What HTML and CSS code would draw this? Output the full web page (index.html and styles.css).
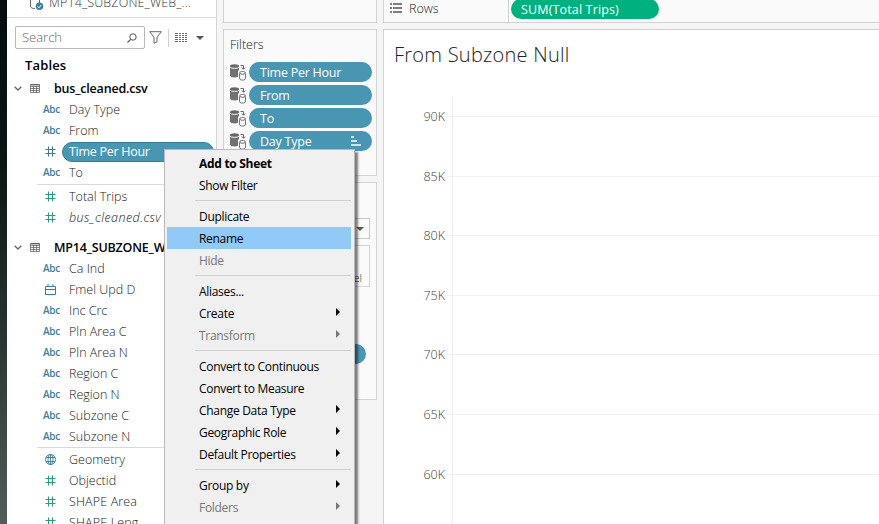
FILE: index.html
```
<!DOCTYPE html>
<html lang="en">
<head>
<meta charset="utf-8">
<title>Worksheet</title>
<link rel="stylesheet" href="styles.css">
</head>
<body>
<svg class="defs" aria-hidden="true">
  <symbol id="hash" viewBox="0 0 11 11"><path d="M3.5 .5v10M7.5 .5v10M.5 3.5h10M.5 7.5h10" fill="none" stroke="currentColor"/></symbol>
  <symbol id="table" viewBox="0 0 10 9"><path d="M.5 .5h9v8h-9zM.5 2.5h9M.5 4.5h9M.5 6.5h9M3.5 2v6M6.5 2v6" fill="none" stroke="#666" stroke-width=".8"/><path d="M.5 .7h9" stroke="#666" stroke-width="1.4"/></symbol>
  <symbol id="chev" viewBox="0 0 8 5"><path d="M.7 .7 4 4 7.3 .7" fill="none" stroke="#666" stroke-width="1.3"/></symbol>
  <symbol id="filterdb" viewBox="0 0 17 17"><path d="M0 2.500v9c0 2.600 9 2.600 9 0v-9z" fill="#717171"/><ellipse cx="4.500" cy="2" rx="4.500" ry="1.700" fill="#666"/><path d="M0 3.200c1 1.500 8 1.500 9 0" stroke="#fafafa" fill="none"/><path d="M8 6.500h3v8H8z" fill="#fafafa"/><rect x="9.500" y="7.500" width="6" height="8.500" rx="2" fill="#fafafa" stroke="#777"/><path d="M10 9.500c1 1 4 1 5 0M10.500 1.500h3V5M11.800 3.600l1.700 1.700 1.700-1.700" fill="none" stroke="#666"/></symbol>
</svg>
<div class="app">
  <div class="desktop"></div>
  <aside class="data">
    <div class="source">
      <svg width="16" height="14" viewBox="0 0 16 14"><path d="M1.500 0v6c0 2 2 2.500 4.500 2.500M10.500 0v3" fill="none" stroke="#666"/><circle cx="10.500" cy="6.300" r="3.800" fill="#3c82a0"/><path d="m8.700 6.300 1.300 1.500 2.300-2.800" fill="none" stroke="#fff"/></svg>
      <span>MP14_SUBZONE_WEB_...</span>
    </div>
    <div class="tools">
      <div class="search"><span>Search</span>
        <svg width="10" height="10" viewBox="0 0 10 10"><circle cx="6" cy="4" r="3.200" fill="none" stroke="#555"/><path d="M3.700 6.300.5 9.500" stroke="#555" stroke-width="1.200"/></svg>
      </div>
      <svg class="funnel" width="13" height="13" viewBox="0 0 13 13"><path d="M.7.700h11.600L8 6.300v4.500L5 12.300v-6z" fill="none" stroke="#666"/></svg>
      <i class="divider"></i>
      <svg class="list" width="12" height="9" viewBox="0 0 12 9"><path d="M0 .5h12M0 2.500h12M0 4.500h12M0 6.500h12M0 8.500h12" stroke="#666" stroke-dasharray="3 1 2 1 2 1 2 0"/></svg>
      <i class="caret"></i>
    </div>
    <h2>Tables</h2>
    <div class="table"><svg class="chev"><use href="#chev"/></svg><svg class="ticon"><use href="#table"/></svg><b>bus_cleaned.csv</b></div>
    <ul>
      <li><i class="abc">Abc</i><span>Day Type</span></li>
      <li><i class="abc">Abc</i><span>From</span></li>
      <li><svg class="hash dim"><use href="#hash"/></svg><span class="selected">Time Per Hour</span></li>
      <li><i class="abc">Abc</i><span>To</span></li>
    </ul>
    <ul class="measures first">
      <li><svg class="hash"><use href="#hash"/></svg><span>Total Trips</span></li>
      <li><svg class="hash"><use href="#hash"/></svg><em>bus_cleaned.csv</em></li>
    </ul>
    <div class="table second"><svg class="chev"><use href="#chev"/></svg><svg class="ticon"><use href="#table"/></svg><b>MP14_SUBZONE_WEB</b></div>
    <ul>
      <li><i class="abc">Abc</i><span>Ca Ind</span></li>
      <li><svg class="hash dim" viewBox="0 0 11 11"><path d="M.5 2.500h10v8H.5zM.5 5.500h10M3 0v3M8 0v3" fill="none" stroke="currentColor"/></svg><span>Fmel Upd D</span></li>
      <li><i class="abc">Abc</i><span>Inc Crc</span></li>
      <li><i class="abc">Abc</i><span>Pln Area C</span></li>
      <li><i class="abc">Abc</i><span>Pln Area N</span></li>
      <li><i class="abc">Abc</i><span>Region C</span></li>
      <li><i class="abc">Abc</i><span>Region N</span></li>
      <li><i class="abc">Abc</i><span>Subzone C</span></li>
      <li><i class="abc">Abc</i><span>Subzone N</span></li>
    </ul>
    <ul class="measures">
      <li><svg class="hash dim" viewBox="0 0 11 11"><g fill="none" stroke="currentColor" stroke-width=".9"><circle cx="5.500" cy="5.500" r="5"/><ellipse cx="5.500" cy="5.500" rx="2.500" ry="5"/><path d="M5.500.5v10M1 3.500h9M1 7.500h9"/></g></svg><span>Geometry</span></li>
      <li><svg class="hash"><use href="#hash"/></svg><span>Objectid</span></li>
      <li><svg class="hash"><use href="#hash"/></svg><span class="caps">SHAPE Area</span></li>
      <li><svg class="hash"><use href="#hash"/></svg><span class="caps">SHAPE Leng</span></li>
    </ul>
  </aside>
  <section class="shelves">
    <div class="card pages"></div>
    <div class="card filters">
      <h3>Filters</h3>
      <div class="filter"><svg><use href="#filterdb"/></svg><span class="pill">Time Per Hour</span></div>
      <div class="filter"><svg><use href="#filterdb"/></svg><span class="pill">From</span></div>
      <div class="filter"><svg><use href="#filterdb"/></svg><span class="pill">To</span></div>
      <div class="filter"><svg><use href="#filterdb"/></svg><span class="pill">Day Type<svg class="sort" viewBox="0 0 10 10"><path d="M0 1h3M0 5h6M0 9h10" stroke="#fff" stroke-width="1.500"/></svg></span></div>
    </div>
    <div class="card marks">
      <div class="select"><i class="caret"></i></div>
      <div class="mark">Label</div>
      <div class="pill"></div>
    </div>
  </section>
  <main>
    <div class="card rows">
      <div class="rowlabel"><svg width="12" height="10" viewBox="0 0 12 10"><path d="M0 1h2M3 1h9M0 5h2M3 5h9M0 9h2M3 9h9" stroke="#555" stroke-width="1.700"/></svg><span>Rows</span></div>
      <span class="pill green">SUM(Total Trips)</span>
    </div>
    <div class="card viz">
      <h1>From Subzone Null</h1>
      <div class="chart">
        <div class="tick"><span>90K</span><i></i></div>
        <div class="tick"><span>85K</span><i></i></div>
        <div class="tick"><span>80K</span><i></i></div>
        <div class="tick"><span>75K</span><i></i></div>
        <div class="tick"><span>70K</span><i></i></div>
        <div class="tick"><span>65K</span><i></i></div>
        <div class="tick"><span>60K</span><i></i></div>
      </div>
    </div>
  </main>
</div>
<nav class="menu">
  <div class="item bold">Add to Sheet</div>
  <div class="item">Show Filter</div>
  <hr>
  <div class="item">Duplicate</div>
  <div class="item hover">Rename</div>
  <div class="item off">Hide</div>
  <hr>
  <div class="item">Aliases...</div>
  <div class="item sub">Create</div>
  <div class="item sub off">Transform</div>
  <hr>
  <div class="item">Convert to Continuous</div>
  <div class="item">Convert to Measure</div>
  <div class="item sub">Change Data Type</div>
  <div class="item sub">Geographic Role</div>
  <div class="item sub">Default Properties</div>
  <hr>
  <div class="item sub">Group by</div>
  <div class="item sub off">Folders</div>
</nav>
</body>
</html>
```
FILE: styles.css
```
* { box-sizing: border-box; }
body { position: relative; margin: 0; width: 879px; height: 524px; overflow: hidden; font: 300 12.5px/21px "Open Sans", sans-serif; color: #222; }
h1, h2, h3, ul { margin: 0; padding: 0; list-style: none; }
svg { flex: none; display: block; }
.defs { position: absolute; width: 0; height: 0; }
.app { display: flex; height: 524px; background: #f5f5f5; overflow: hidden; white-space: nowrap; }
.desktop { flex: none; width: 7px; background: linear-gradient(#040c0f, #0a1516 30%, #25302f 60%, #3a4746 80%, #525c5b); }
.data { flex: none; width: 210px; background: #fff; border-right: 1px solid #d4d4d4; overflow: hidden; }
.source { height: 18px; border-bottom: 1px solid #ddd; display: flex; padding-left: 22px; overflow: hidden; }
.source span { margin: -8px 0 0 4px; color: #333; letter-spacing: .15px; }
.tools { display: flex; align-items: center; margin-top: 8px; padding-left: 8px; height: 23px; }
.search { width: 130px; height: 23px; border: 1px solid #b8b8b8; border-radius: 2px; display: flex; align-items: center; justify-content: space-between; padding: 0 7px 0 6px; color: #666; font-size: 13px; }
.funnel { margin-left: 4px; }
.divider { width: 1px; height: 18px; background: #d0d0d0; margin: 0 6px; }
.caret { border: 4px solid transparent; border-top: 4px solid #555; border-bottom: 0; margin-left: 9px; }
h2 { font: 600 13px/20px "Open Sans", sans-serif; color: #000; padding-left: 18px; margin-top: 6px; letter-spacing: .15px; }
.table { height: 21px; display: flex; align-items: center; margin-top: 3px; padding-left: 7px; color: #000; }
.table b { font-weight: 600; font-size: 12.5px; letter-spacing: -.2px; margin-left: 13px; }
.chev { width: 8px; height: 5px; }
.ticon { width: 10px; height: 9px; margin: 0 1px 0 8px; }
.second { margin-top: 9px; }
li { display: flex; align-items: center; height: 21px; padding-left: 36px; }
li span, li em { color: #222; flex: 1; }
li em { letter-spacing: .45px; }
li .caps { letter-spacing: .15px; }
.abc { width: 26px; font: 600 10px/21px "Open Sans", sans-serif; letter-spacing: -.3px; color: #417f9b; }
.hash { width: 11px; height: 11px; margin: 0 13px 0 2px; color: #2f9a78; }
.dim { color: #3a7b99; }
li .selected { height: 20px; line-height: 18px; margin-left: -7px; margin-right: 2px; padding-left: 6px; border-radius: 10px; border: 1px solid #347e9c; background: #4996b2; color: #fff; font-weight: 500; letter-spacing: -.28px; }
.measures { position: relative; padding-top: 2px; }
.measures::before { content: ""; position: absolute; left: 30px; right: 0; top: 0; height: 1px; background: #d9d9d9; }
.first { margin-top: 1px; }
.shelves { width: 154px; margin-left: 6px; display: flex; flex-direction: column; gap: 6px; flex: none; }
.card { border: 1px solid #d2d2d2; background: #fafafa; flex: none; }
.pages { height: 23px; border-top: 0; }
.filters { height: 147px; padding: 5px 4px 0 6px; }
h3 { font: 300 12.5px/20px "Open Sans", sans-serif; color: #222; margin-bottom: 7px; }
.filter { display: flex; height: 20px; margin-bottom: 3px; }
.filter > svg { width: 17px; height: 17px; margin: 2px 2px 0 0; }
.pill { flex: 1; height: 20px; border-radius: 10px; background: #4996b2; color: #fff; font-weight: 500; letter-spacing: -.24px; line-height: 19px; padding: 0 11px; display: flex; justify-content: space-between; align-items: center; }
.sort { width: 10px; height: 10px; }
.marks { height: 218px; padding: 35px 6px 0; }
.select { height: 21px; border: 1px solid #c8c8c8; background: #fafafa; display: flex; align-items: center; justify-content: flex-end; padding-right: 5px; }
.mark { height: 42px; margin-top: 6px; border: 1px solid #d4d4d4; font-size: 11px; text-align: right; padding: 21px 7px 0 0; color: #333; }
.marks .pill { margin: 57px 4px 0; }
main { margin-left: 6px; width: 520px; display: flex; flex-direction: column; gap: 6px; flex: none; }
.rows { height: 23px; border-top: 0; display: flex; align-items: flex-start; }
.rowlabel { width: 125px; height: 22px; border-right: 1px solid #d2d2d2; display: flex; align-items: flex-start; padding: 3px 0 0 6px; gap: 7px; }
.rowlabel span { margin-top: -5px; }
.rows .green { flex: none; width: 148px; margin: -1px 0 0 2px; padding-left: 10px; background: #00b180; letter-spacing: .15px; }
.viz { flex: 1; background: #fff; padding: 10px 0 0 10px; }
h1 { font: 300 20px/30px "Open Sans", sans-serif; color: #222; letter-spacing: .25px; }
.chart { margin: 27px 0 0 -10px; padding-top: 10px; background: linear-gradient(#ededed, #ededed) 68px 0 / 1px 100% no-repeat; }
.tick { height: 59.6px; display: flex; align-items: flex-start; }
.tick span { width: 61px; text-align: right; color: #444; line-height: 20px; }
.tick i { flex: 1; height: 1px; margin: 9px 0 0 2px; background: #f0f0f0; }
.menu { position: absolute; left: 164px; top: 149px; width: 191px; height: 400px; padding: 2px 3px 2px 2px; border: 1px solid #b9b9b9; background: #f0f0f0; box-shadow: 3px 3px 2px rgba(0,0,0,.5); font: 400 12px/22px "Open Sans", sans-serif; letter-spacing: -.3px; color: #000; }
.item { position: relative; height: 22px; padding-left: 32px; line-height: 23px; }
.bold { font-weight: 700; }
.hover { background: #91c9f7; }
.off { color: #777; }
.sub::after { content: ""; position: absolute; right: 11px; top: 6px; border: 4px solid transparent; border-left-color: currentColor; border-right: 0; }
hr { border: 0; height: 1px; background: #d0d0d0; margin: 4px 0 4px 28px; }
```
